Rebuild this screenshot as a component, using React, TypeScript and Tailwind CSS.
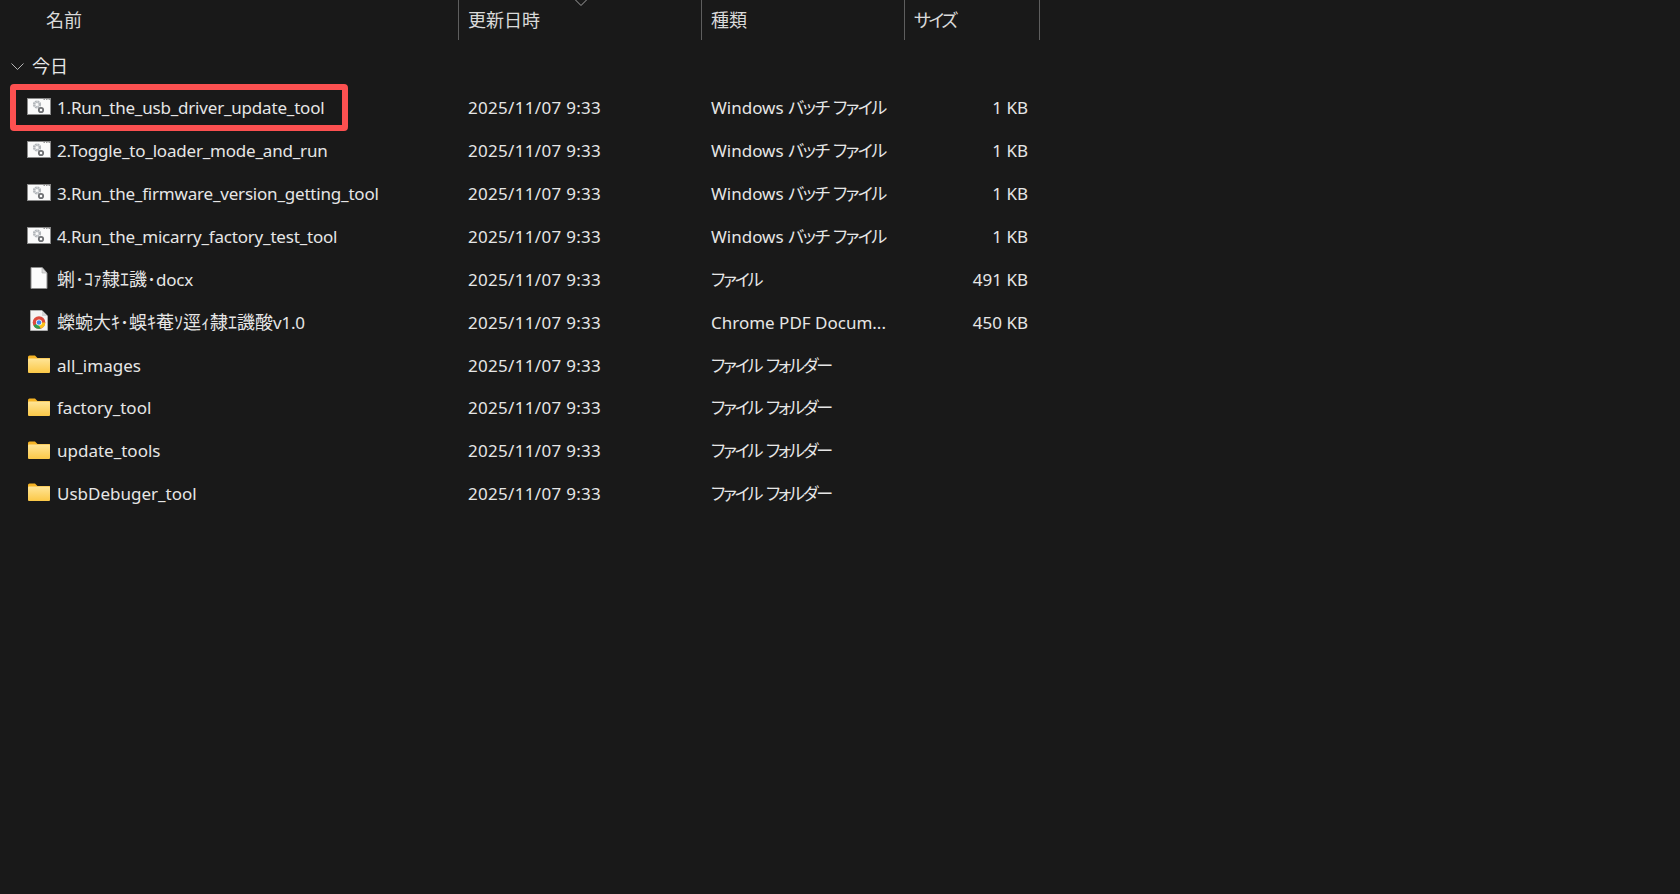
import React from 'react';

const fontStack = { fontFamily: '"Noto Sans", "Noto Sans CJK JP", sans-serif' };

type Kind = 'bat' | 'doc' | 'pdf' | 'folder';

// Explorer's katakana is much tighter than a plain full-width run
const Kana = ({ children }: { children: React.ReactNode }) => (
  <span className="[font-feature-settings:'palt'] tracking-[-1.5px]">{children}</span>
);

const KanaTight = ({ children }: { children: React.ReactNode }) => (
  <span className="[font-feature-settings:'palt'] tracking-[-2.1px]">{children}</span>
);

const batType = <>Windows <Kana>バッチ</Kana> <Kana>ファイル</Kana></>;
const folderType = <><KanaTight>ファイル</KanaTight> <KanaTight>フォルダー</KanaTight></>;

interface Row {
  name: React.ReactNode;
  kind: Kind;
  type: React.ReactNode;
  size?: string;
}

const Jp = ({ children }: { children: React.ReactNode }) => (
  <span className="text-[18px] tracking-normal">{children}</span>
);

const rows: Row[] = [
  { name: '1.Run_the_usb_driver_update_tool', kind: 'bat', type: batType, size: '1 KB' },
  { name: '2.Toggle_to_loader_mode_and_run', kind: 'bat', type: batType, size: '1 KB' },
  { name: '3.Run_the_firmware_version_getting_tool', kind: 'bat', type: batType, size: '1 KB' },
  { name: '4.Run_the_micarry_factory_test_tool', kind: 'bat', type: batType, size: '1 KB' },
  { name: <><Jp>蜊･ｺｧ隸ｴ譏･</Jp>docx</>, kind: 'doc', type: <KanaTight>ファイル</KanaTight>, size: '491 KB' },
  { name: <><Jp>蠑蜿大ｷ･蜈ｷ菴ｿ逕ｨ隸ｴ譏酸</Jp>v1.0</>, kind: 'pdf', type: 'Chrome PDF Docum...', size: '450 KB' },
  { name: 'all_images', kind: 'folder', type: folderType },
  { name: 'factory_tool', kind: 'folder', type: folderType },
  { name: 'update_tools', kind: 'folder', type: folderType },
  { name: 'UsbDebuger_tool', kind: 'folder', type: folderType },
];

const BatIcon = () => (
  <svg width="24" height="17" viewBox="0 0 24 17">
    <rect x="0.5" y="0.5" width="23" height="16" fill="#fafafa" stroke="#8a8a8a" />
    <rect x="16.500" y="1" width="1.500" height="1" fill="#999" />
    <rect x="19" y="1" width="1.500" height="1" fill="#999" />
    <rect x="21.500" y="1" width="1.500" height="1" fill="#999" />
    <circle cx="10" cy="6.500" r="2.800" fill="none" stroke="#b2b6ba" strokeWidth="2.600" strokeDasharray="1.700 0.500" />
    <circle cx="14" cy="12" r="2.200" fill="none" stroke="#6e7073" strokeWidth="1.800" />
  </svg>
);

const DocIcon = () => (
  <svg width="18" height="22" viewBox="0 0 18 22">
    <path d="M1 .5h11l5 5.500v15.500H1z" fill="#fcfcfc" stroke="#8c8c8c" />
    <path d="M12 .5v5.500h5z" fill="#dcdcdc" stroke="#a8a8a8" strokeWidth="0.600" />
  </svg>
);

const PdfIcon = () => (
  <svg width="18" height="21" viewBox="0 0 18 21">
    <path d="M0.500 .5h11.500l5.500 5.500v14.500H0.500z" fill="#f4f4f4" stroke="#c4c4c4" strokeWidth="0.600" />
    <path d="M12 .5v5.500h5.500z" fill="#d4d4d4" />
    <circle cx="9" cy="12.500" r="6.300" fill="#dd4b3e" />
    <path d="M9 12.500L3.500 15.600a6.300 6.300 0 0 0 7.300 2.900z" fill="#2f9e4f" />
    <path d="M9 12.500h6.300a6.300 6.300 0 0 1-4.500 6L7.500 13.500z" fill="#f9c21a" />
    <circle cx="9" cy="12.500" r="3" fill="#fff" />
    <circle cx="9" cy="12.500" r="2.300" fill="#3f86ee" />
  </svg>
);

const FolderIcon = () => (
  <svg width="22" height="18" viewBox="0 0 22 18">
    <defs>
      <linearGradient id="folderFill" x1="0" y1="0" x2="0" y2="1">
        <stop offset="0" stopColor="#ffe597" />
        <stop offset="1" stopColor="#fbc847" />
      </linearGradient>
    </defs>
    <path d="M0 2a1.500 1.500 0 0 1 1.500-1.500h5.500l2.500 2.500H22v2H0z" fill="#f5b324" />
    <rect x="0" y="3.500" width="22" height="14.500" rx="1" fill="url(#folderFill)" />
  </svg>
);

const FileIcon = ({ kind }: { kind: Kind }) => {
  if (kind === 'bat') return <BatIcon />;
  if (kind === 'doc') return <DocIcon />;
  if (kind === 'pdf') return <PdfIcon />;
  return <FolderIcon />;
};

export default function App() {
  return (
    <div className="relative w-[1680px] h-[894px] overflow-hidden bg-[#191919] text-[17px] text-[#e6e6e6]" style={fontStack}>
      {/* column headers */}
      <div className="relative flex h-10 text-[#dadada] text-[18px]">
        <div className="w-[459px] pl-[46px] pt-[7px] border-r border-[#5e5e5e]">名前</div>
        <div className="w-[243px] pl-[9px] pt-[7px] border-r border-[#5e5e5e]">更新日時</div>
        <div className="w-[203px] pl-[9px] pt-[7px] border-r border-[#5e5e5e]">種類</div>
        <div className="w-[135px] pl-[9px] pt-[7px] border-r border-[#5e5e5e]">
          <span className="[font-feature-settings:'palt'] tracking-[-2.5px]">サイズ</span>
        </div>
        <svg className="absolute left-[575px] top-0" width="12" height="6" viewBox="0 0 12 6">
          <path d="M0.500 0L6 5.500 11.500 0" fill="none" stroke="#a0a0a0" />
        </svg>
      </div>

      {/* group title */}
      <div className="flex items-center h-[46px] pt-[6px] pl-[11px] gap-[8px]">
        <svg width="13" height="7" viewBox="0 0 13 7">
          <path d="M0.500 0.500L6.500 6.500 12.500 0.500" fill="none" stroke="#b4b4b4" />
        </svg>
        <span className="text-[18px]">今日</span>
      </div>

      <div className="pt-[0.5px]">
        {rows.map((r, i) => (
          <div key={i} className="flex items-center h-[42.9px]">
            <div className="w-[459px] flex items-center">
              <div className="w-[57px] pl-[27px] pr-[6px] pb-[3px] flex justify-center shrink-0">
                <FileIcon kind={r.kind} />
              </div>
              <span className={r.kind === 'folder' ? 'whitespace-nowrap' : 'whitespace-nowrap tracking-[-0.2px]'}>{r.name}</span>
            </div>
            <div className="w-[243px] pl-[9px] tracking-[0.3px]">2025/11/07 9:33</div>
            <div className="w-[202px] pl-[9px] whitespace-nowrap">{r.type}</div>
            <div className="w-[124px] text-right">{r.size}</div>
          </div>
        ))}
      </div>

      {/* red highlight drawn over the first row */}
      <div className="absolute left-[10px] top-[84px] w-[338px] h-[47px] border-[6px] border-[#fc5050] rounded-[4px]" />
    </div>
  );
}
